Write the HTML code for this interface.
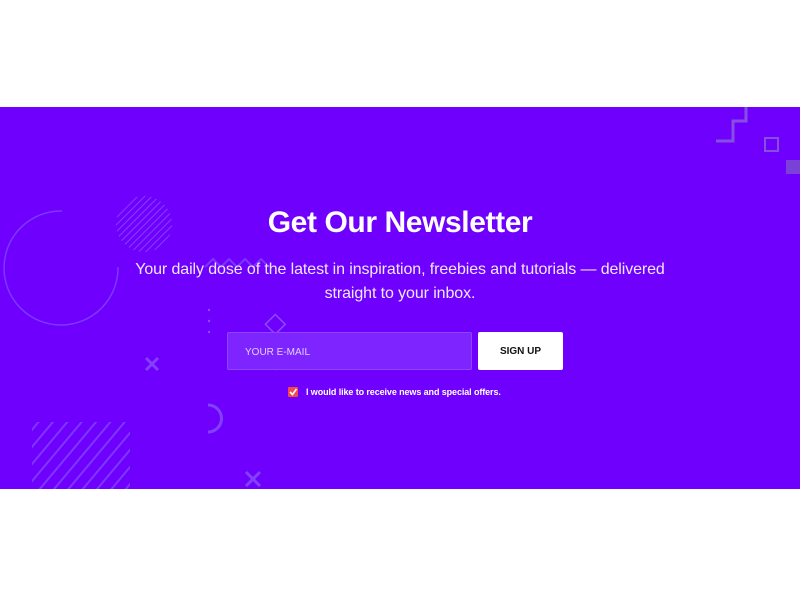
<!DOCTYPE html>
<html><head><meta charset="utf-8"><style>
*{margin:0;padding:0;box-sizing:border-box}
body{width:800px;height:600px;background:#fff;font-family:"Liberation Sans",sans-serif;position:relative;overflow:hidden}
.band{position:absolute;left:0;top:107px;width:800px;height:382px;background:#6f00fe;overflow:hidden}
h1{position:absolute;top:206px;left:0;width:800px;text-align:center;color:#fff;font-size:30px;font-weight:bold;letter-spacing:-0.4px}
.sub{position:absolute;top:258px;left:100px;width:600px;text-align:center;color:#f0e8ff;font-size:16px;line-height:24px;letter-spacing:-0.1px}
.inp{position:absolute;left:227px;top:332px;width:245px;height:38px;background:#7d24ff;border:1px solid #8f45ff;border-radius:2px;color:#e2d0ff;font-size:10px;padding:14px 0 0 17px}
.btn{position:absolute;left:478px;top:332px;width:85px;height:38px;background:#fff;border-radius:2px;color:#111;font-size:10px;font-weight:bold;text-align:center;line-height:39px}
.chk{position:absolute;left:288px;top:387px;width:10px;height:10px;background:#f4484e;border-radius:1px}
.lbl{position:absolute;left:306px;top:387px;color:#fff;font-size:9px;font-weight:bold;letter-spacing:-0.1px}
</style></head><body>
<div class="band">
<svg width="800" height="382" style="position:absolute;left:0;top:0">
<defs><pattern id="h" width="5" height="5" patternUnits="userSpaceOnUse" patternTransform="rotate(45)"><rect width="1" height="5" fill="#8440ff"/></pattern>
<pattern id="h2" width="11" height="11" patternUnits="userSpaceOnUse" patternTransform="rotate(40)"><rect width="2" height="11" fill="#7c38ff"/></pattern></defs>
<circle cx="144" cy="117" r="28" fill="url(#h)"/>
<path d="M62 104 A57 57 0 1 0 118 160" fill="none" stroke="#7d38ff" stroke-width="1.5"/>
<rect x="32" y="315" width="98" height="70" fill="url(#h2)"/>
<path d="M146 251 L158 263 M158 251 L146 263" stroke="#8240ff" stroke-width="3"/>
<path d="M246 365 L260 379 M260 365 L246 379" stroke="#8240ff" stroke-width="3"/>
<path d="M208 298 A13 13 0 0 1 208 325" fill="none" stroke="#8240ff" stroke-width="3"/>
<rect x="268" y="211" width="14" height="14" transform="rotate(45 276 218)" fill="none" stroke="#8a4cff" stroke-width="1.5"/>
<rect x="270" y="251" width="11" height="11" transform="rotate(45 276 256)" fill="#7e36ff"/>
<circle cx="209" cy="203" r="1.2" fill="#8a4cff"/><circle cx="209" cy="214" r="1.2" fill="#8a4cff"/><circle cx="209" cy="225" r="1.2" fill="#8a4cff"/>
<path d="M205 160 l8 -8 l8 8 l8 -8 l8 8 l8 -8 l8 8 l8 -8 l8 8" fill="none" stroke="#7e36ff" stroke-width="2"/>
<path d="M746 0 V14 H733 V34 H716" fill="none" stroke="#8550e0" stroke-width="3"/>
<rect x="765" y="31" width="13" height="13" fill="none" stroke="#8550e0" stroke-width="2"/>
<rect x="786" y="53" width="14" height="14" fill="#7a40d8"/>
</svg>
</div>
<h1>Get Our Newsletter</h1>
<div class="sub">Your daily dose of the latest in inspiration, freebies and tutorials — delivered<br>straight to your inbox.</div>
<div class="inp">YOUR E-MAIL</div>
<div class="btn">SIGN UP</div>
<div class="chk"><svg width="10" height="10" style="display:block"><path d="M2 5 L4.5 7.5 L8.5 2" stroke="#fff" stroke-width="1.6" fill="none"/></svg></div>
<div class="lbl">I would like to receive news and special offers.</div>
</body></html>
